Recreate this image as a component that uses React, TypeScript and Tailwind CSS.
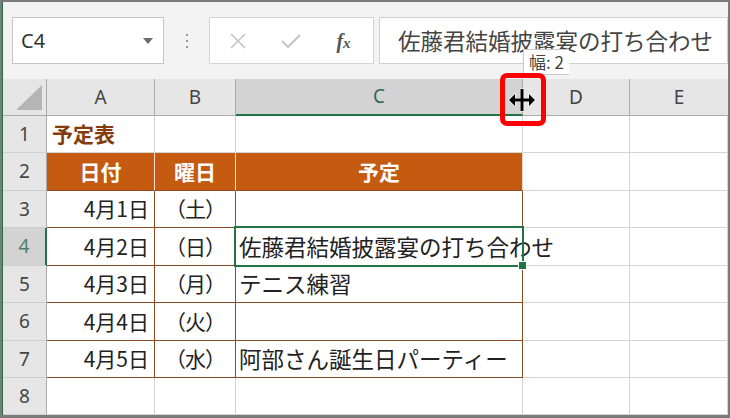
import React from "react";

const COLS = "grid grid-cols-[44px_108px_81px_287px_107px_1fr]";
const HDR = "flex items-center justify-center bg-[#e6e6e6] text-[#444] font-['Noto_Sans',sans-serif] text-[19px]";
const RH = `${HDR} border-r border-r-[#ababab] border-b border-b-[#cfcfcf]`;
const GRID = "border-r border-b border-[#d4d4d4]";
const JP = "font-['Noto_Sans_CJK_JP',sans-serif]";
const BR = "border-r border-b border-[#8b4a1f]";

function Row({ h, children }: { h: string; children: React.ReactNode }) {
  return <div className={`${COLS} ${h}`}>{children}</div>;
}

export default function App() {
  const data = [
    { n: "3", d: "4月1日", w: "（土）", t: "", h: "h-[37px]" },
    { n: "4", d: "4月2日", w: "（日）", t: "佐藤君結婚披露宴の打ち合わせ", h: "h-[38px]", sel: true },
    { n: "5", d: "4月3日", w: "（月）", t: "テニス練習", h: "h-[37px]" },
    { n: "6", d: "4月4日", w: "（火）", t: "", h: "h-[38px]" },
    { n: "7", d: "4月5日", w: "（水）", t: "阿部さん誕生日パーティー", h: "h-[37px]" },
  ];
  return (
    <div className="w-[730px] h-[418px] bg-[#7b7b7b] pt-[2px] pl-[2px] pr-[2px] pb-[3px] overflow-hidden">
      <div className="relative w-full h-full border-l border-[#217346] bg-white flex flex-col overflow-hidden">
        {/* toolbar */}
        <div className="h-[77px] shrink-0 bg-[#f3f3f3] flex items-start pt-[15px]">
          <div className="ml-[9px] w-[152px] h-[47px] bg-white border border-[#c6c6c6] flex items-center justify-between pl-[8px] pr-[10px]">
            <span className="text-[20px] text-[#333] font-['Noto_Sans',sans-serif]">C4</span>
            <svg width="10" height="6" viewBox="0 0 10 6">
              <path d="M0 0 L10 0 L5 6 Z" fill="#6b6b6b" />
            </svg>
          </div>
          <div className="w-[45px] h-[47px] flex flex-col items-center justify-center gap-[4px]">
            <div className="w-[2px] h-[2px] bg-[#9a9a9a]" />
            <div className="w-[2px] h-[2px] bg-[#9a9a9a]" />
            <div className="w-[2px] h-[2px] bg-[#9a9a9a]" />
          </div>
          <div className="w-[165px] h-[47px] bg-white border border-[#d4d4d4] flex items-center pl-[1px]">
            <div className="w-[53px] flex items-center justify-center">
              <svg width="16" height="16" viewBox="0 0 16 16">
                <path d="M1 1 L15 15 M15 1 L1 15" stroke="#c4c4c4" strokeWidth="1.6" />
              </svg>
            </div>
            <div className="w-[53px] flex items-center justify-center">
              <svg width="20" height="16" viewBox="0 0 20 16">
                <path d="M1 8 L7 14 L19 2" stroke="#c4c4c4" strokeWidth="2" fill="none" />
              </svg>
            </div>
            <div className="w-[53px] flex items-center justify-center">
              <span className="italic font-bold text-[#555] font-['Liberation_Serif',serif] text-[20px] leading-none">
                f<span className="text-[15px]">x</span>
              </span>
            </div>
          </div>
          <div className={`ml-[5px] flex-1 h-[47px] bg-white border border-[#d0d0d0] flex items-center pl-[18px] text-[22.5px] text-[#444] whitespace-nowrap overflow-hidden ${JP}`}>
            佐藤君結婚披露宴の打ち合わせ
          </div>
        </div>

        {/* column header */}
        <Row h="h-[37px]">
          <div className="relative bg-[#e6e6e6] border-r border-b border-[#ababab]">
            <svg className="absolute right-[4px] bottom-[5px]" width="26" height="25" viewBox="0 0 26 25">
              <path d="M26 0 L26 25 L0 25 Z" fill="#b5b5b5" />
            </svg>
          </div>
          <div className={`${HDR} border-r border-b border-[#ababab]`}>A</div>
          <div className={`${HDR} border-r border-b border-[#ababab]`}>B</div>
          <div className="flex items-center justify-center bg-[#d3d3d3] text-[#2f6b55] font-['Noto_Sans',sans-serif] text-[19px] border-r border-r-[#ababab] border-b-2 border-b-[#217346]">C</div>
          <div className={`${HDR} border-r border-b border-[#ababab]`}>D</div>
          <div className={`${HDR} border-b border-[#ababab]`}>E</div>
        </Row>

        {/* row 1 */}
        <Row h="h-[37px]">
          <div className={RH}>1</div>
          <div className={`${GRID} flex items-center pl-[5px] font-bold text-[21px] text-[#843c0c] ${JP}`}>予定表</div>
          <div className={GRID} />
          <div className={GRID} />
          <div className={GRID} />
          <div className={GRID} />
        </Row>

        {/* row 2 */}
        <Row h="h-[38px]">
          <div className={RH}>2</div>
          <div className={`bg-[#c55a11] border-r border-r-[#f4e0d0] border-b border-b-[#8b4a1f] flex items-center justify-center text-white font-bold text-[21px] ${JP}`}>日付</div>
          <div className={`bg-[#c55a11] border-r border-r-[#f4e0d0] border-b border-b-[#8b4a1f] flex items-center justify-center text-white font-bold text-[21px] ${JP}`}>曜日</div>
          <div className={`bg-[#c55a11] border-r border-r-[#e8d8cc] border-b border-b-[#8b4a1f] flex items-center justify-center text-white font-bold text-[21px] ${JP}`}>予定</div>
          <div className={GRID} />
          <div className={GRID} />
        </Row>

        {data.map((r) => (
          <Row key={r.n} h={r.h}>
            <div
              className={
                r.sel
                  ? "flex items-center justify-center bg-[#d3d3d3] text-[#4f7f6c] font-['Noto_Sans',sans-serif] text-[19px] border-r-2 border-r-[#217346] border-b border-b-[#cfcfcf]"
                  : RH
              }
            >
              {r.n}
            </div>
            <div className={`${BR} flex items-center justify-end pr-[5px] text-[21px] text-[#222] ${JP}`}>{r.d}</div>
            <div className={`${BR} flex items-center justify-center text-[21px] tracking-[-1px] text-[#222] ${JP}`}>{r.w}</div>
            <div className={`${BR} flex items-center pl-[3px] text-[22.5px] text-[#222] whitespace-nowrap ${JP}`}>
              <span className="relative z-10">{r.t}</span>
            </div>
            <div className={GRID} />
            <div className={GRID} />
          </Row>
        ))}

        {/* row 8 */}
        <Row h="h-[37px]">
          <div className={RH}>8</div>
          <div className={GRID} />
          <div className={GRID} />
          <div className={GRID} />
          <div className={GRID} />
          <div className={GRID} />
        </Row>

        {/* selection */}
        <div className="absolute left-[231px] top-[224px] w-[290px] h-[41px] border-2 border-[#217346] z-20 pointer-events-none" />
        <div className="absolute left-[515px] top-[259px] w-[9px] h-[9px] bg-[#217346] border border-white z-30" />

        {/* tooltip */}
        <div className={`absolute left-[520px] top-[47px] w-[46px] h-[26px] bg-white border-l border-t border-b border-[#c8c8c8] overflow-hidden z-30 pl-[5px] flex items-center text-[17px] text-[#444] whitespace-nowrap ${JP}`}>
          幅: 2
        </div>

        {/* red box */}
        <div className="absolute left-[497px] top-[71px] w-[46px] h-[53px] border-[5px] border-[#ff0000] rounded-[7px] z-30" />

        {/* cursor */}
        <svg className="absolute left-[505px] top-[85px] z-40" width="28" height="26" viewBox="0 0 28 26">
          <path
            d="M1 13 L7 7 L7 11.5 L12.5 11.5 L12.5 2 L15.5 2 L15.5 11.5 L21 11.5 L21 7 L27 13 L21 19 L21 14.5 L15.5 14.5 L15.5 24 L12.5 24 L12.5 14.5 L7 14.5 L7 19 Z"
            fill="#000"
            stroke="#fff"
            strokeWidth="1.2"
            strokeLinejoin="round"
            paintOrder="stroke"
          />
        </svg>
      </div>
    </div>
  );
}
